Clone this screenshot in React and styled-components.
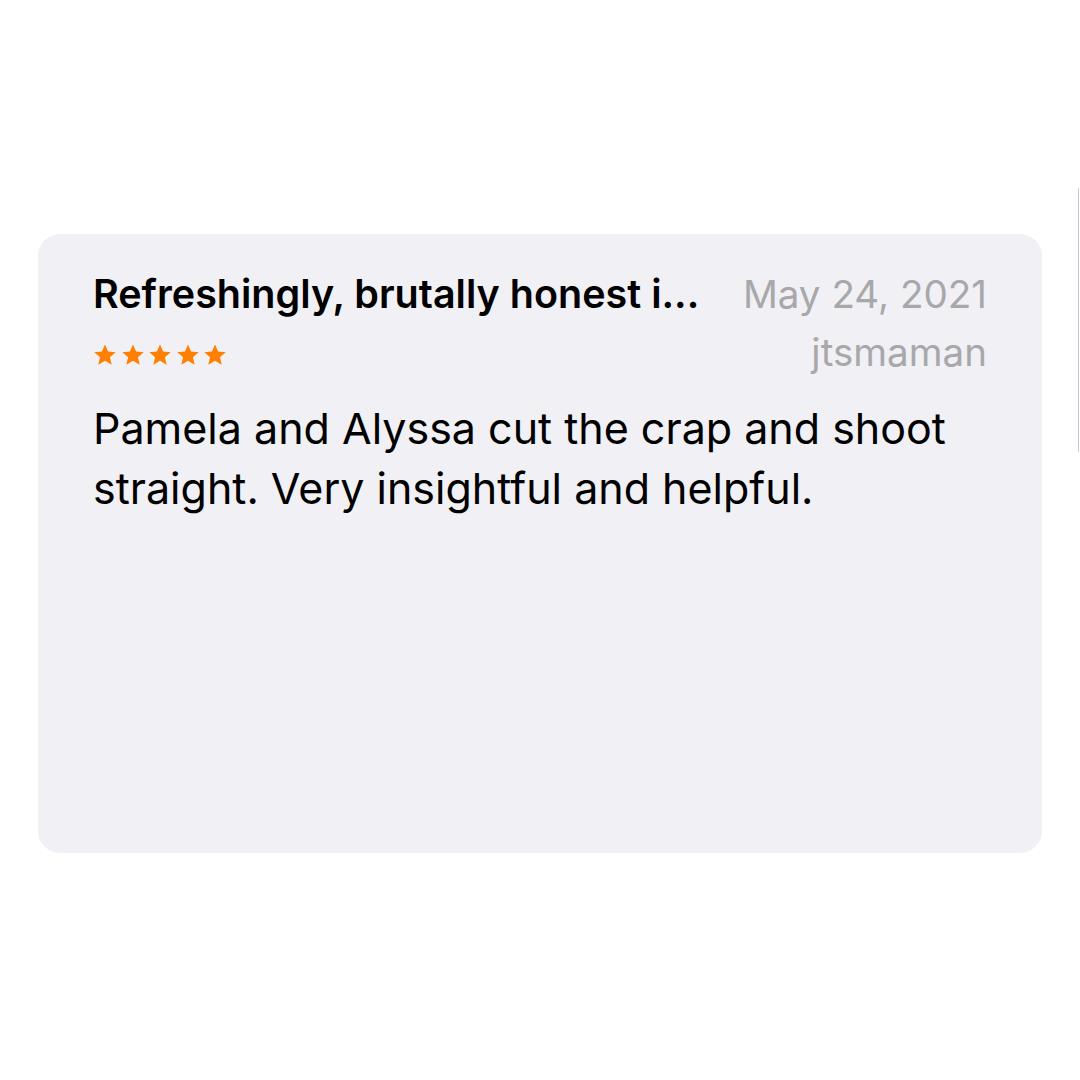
import React from 'react'
import styled, { createGlobalStyle } from 'styled-components'

const Global = createGlobalStyle`
  html, body {
    margin: 0;
    padding: 0;
    background: #ffffff;
  }
  body {
    font-family: Inter, "Noto Sans", "Liberation Sans", sans-serif;
    -webkit-font-smoothing: antialiased;
  }
`

const Page = styled.div`
  width: 1080px;
  height: 1080px;
  position: relative;
  display: flex;
  align-items: flex-start;
  padding-top: 234px;
  box-sizing: border-box;
  overflow: hidden;
`

const Card = styled.div`
  margin-left: 38px;
  width: 1004px;
  height: 619px;
  box-sizing: border-box;
  background: #f1f0f5;
  border-radius: 22px;
  padding: 36px 55px 0 55px;
`

// edge of the next card peeking in at the right
const NextEdge = styled.div`
  position: absolute;
  left: 1078px;
  top: 188px;
  width: 1px;
  height: 264px;
  background: #c9c9cc;
`

const Header = styled.div`
  display: flex;
  justify-content: space-between;
  align-items: flex-start;
  gap: 40px;
`

const Left = styled.div`
  display: flex;
  flex-direction: column;
  min-width: 0;
  flex: 1;
`

const Right = styled.div`
  display: flex;
  flex-direction: column;
  align-items: flex-end;
  flex-shrink: 0;
`

const Title = styled.div`
  font-size: 39.5px;
  font-weight: 600;
  color: #000;
  line-height: 48px;
  white-space: nowrap;
  letter-spacing: 0;
`

const Meta = styled.div`
  font-size: 38.6px;
  color: #a8a8ab;
  line-height: 48px;
  margin-bottom: ${p => p.$gap || 0}px;
`

const Stars = styled.div`
  display: flex;
  gap: 3.6px;
  margin-top: 25px;
`

const Body = styled.p`
  margin: 22px 0 0;
  font-size: 43px;
  line-height: 60px;
  color: #000;
`

const Star = () => (
  <svg width="24" height="24" viewBox="0 0 24 24">
    <path
      d="M12 1.5l3.1 7.1 7.6.6-5.8 5 1.8 7.5L12 17.7l-6.7 4 1.8-7.5-5.8-5 7.6-.6z"
      fill="#ff7f00"
    />
  </svg>
)

export default function App() {
  return (
    <>
      <Global />
      <Page>
        <Card>
          <Header>
            <Left>
              <Title>Refreshingly, brutally honest i...</Title>
              <Stars>
                {[0, 1, 2, 3, 4].map(i => <Star key={i} />)}
              </Stars>
            </Left>
            <Right>
              <Meta $gap={10}>May 24, 2021</Meta>
              <Meta>jtsmaman</Meta>
            </Right>
          </Header>
          <Body>
            Pamela and Alyssa cut the crap and shoot straight. Very insightful and helpful.
          </Body>
        </Card>
        <NextEdge />
      </Page>
    </>
  )
}
